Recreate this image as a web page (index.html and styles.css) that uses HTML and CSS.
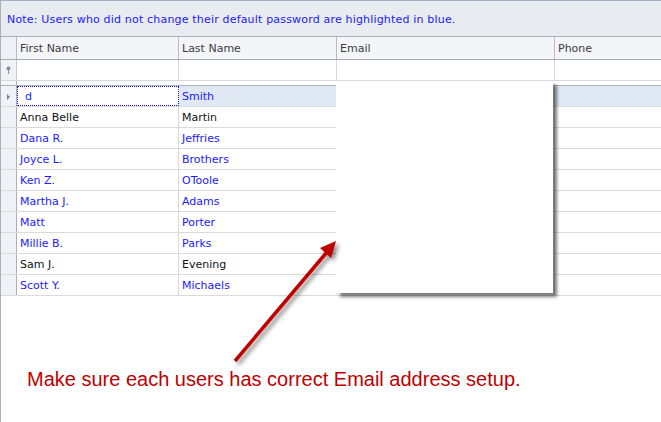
FILE: index.html
```html
<!DOCTYPE html>
<html lang="en">
<head>
    <meta charset="UTF-8">
    <meta name="viewport" content="width=device-width, initial-scale=1.0">
    <title>Users</title>
    <link rel="stylesheet" href="styles.css">
</head>
<body>
    <div class="panel">
        <div class="note">Note: Users who did not change their default password are highlighted in blue.</div>

        <div class="grid">
            <div class="row header">
                <div class="cell indicator"></div>
                <div class="cell">First Name</div>
                <div class="cell">Last Name</div>
                <div class="cell">Email</div>
                <div class="cell">Phone</div>
            </div>
            <div class="row filter">
                <div class="cell indicator">
                    <svg width="7" height="8" viewBox="0 0 7 8">
                        <circle cx="3.5" cy="2.5" r="2" fill="#8a8f96"/>
                        <rect x="3" y="4" width="1" height="4" fill="#8a8f96"/>
                    </svg>
                </div>
                <div class="cell"></div>
                <div class="cell"></div>
                <div class="cell"></div>
                <div class="cell"></div>
            </div>
            <div class="filter-gap"><div class="cell indicator"></div></div>

            <div class="row data selected default-pw">
                <div class="cell indicator">
                    <svg width="5" height="8" viewBox="0 0 5 8"><path d="M1 1 L4 4 L1 7 Z" fill="#7d8188"/></svg>
                </div>
                <div class="cell focused">d</div>
                <div class="cell">Smith</div>
                <div class="cell"></div>
                <div class="cell"></div>
            </div>
            <div class="row data">
                <div class="cell indicator"></div>
                <div class="cell">Anna Belle</div>
                <div class="cell">Martin</div>
                <div class="cell"></div>
                <div class="cell"></div>
            </div>
            <div class="row data default-pw">
                <div class="cell indicator"></div>
                <div class="cell">Dana R.</div>
                <div class="cell">Jeffries</div>
                <div class="cell"></div>
                <div class="cell"></div>
            </div>
            <div class="row data default-pw">
                <div class="cell indicator"></div>
                <div class="cell">Joyce L.</div>
                <div class="cell">Brothers</div>
                <div class="cell"></div>
                <div class="cell"></div>
            </div>
            <div class="row data default-pw">
                <div class="cell indicator"></div>
                <div class="cell">Ken Z.</div>
                <div class="cell">OToole</div>
                <div class="cell"></div>
                <div class="cell"></div>
            </div>
            <div class="row data default-pw">
                <div class="cell indicator"></div>
                <div class="cell">Martha J.</div>
                <div class="cell">Adams</div>
                <div class="cell"></div>
                <div class="cell"></div>
            </div>
            <div class="row data default-pw">
                <div class="cell indicator"></div>
                <div class="cell">Matt</div>
                <div class="cell">Porter</div>
                <div class="cell"></div>
                <div class="cell"></div>
            </div>
            <div class="row data default-pw">
                <div class="cell indicator"></div>
                <div class="cell">Millie B.</div>
                <div class="cell">Parks</div>
                <div class="cell"></div>
                <div class="cell"></div>
            </div>
            <div class="row data">
                <div class="cell indicator"></div>
                <div class="cell">Sam J.</div>
                <div class="cell">Evening</div>
                <div class="cell"></div>
                <div class="cell"></div>
            </div>
            <div class="row data default-pw">
                <div class="cell indicator"></div>
                <div class="cell">Scott Y.</div>
                <div class="cell">Michaels</div>
                <div class="cell"></div>
                <div class="cell"></div>
            </div>
        </div>

        <!-- blank email editor dropdown -->
        <div class="email-popup"></div>

        <!-- callout arrow -->
        <svg class="callout-arrow" viewBox="0 0 661 422" width="661" height="422">
            <line x1="235" y1="361" x2="327" y2="252" stroke="#c00000" stroke-width="3.5"/>
            <path d="M336 241 L331 258 L320 248 Z" fill="#c00000"/>
        </svg>

        <p class="callout-text">Make sure each users has correct Email address setup.</p>
    </div>
</body>
</html>
```

FILE: styles.css
```css
* {
    box-sizing: border-box;
}

body {
    margin: 0;
    width: 661px;
    height: 422px;
    overflow: hidden;
    background-color: #fff;
    font-family: "DejaVu Sans", Tahoma, sans-serif;
    font-size: 11px;
}

.panel {
    position: relative;
    height: 422px;
    border-top: 1px solid #a9b0b9;
    border-left: 1px solid #a9b0b9;
}

.note {
    height: 36px;
    padding: 1px 0 0 6px;
    display: flex;
    align-items: center;
    background-color: #e8ebf0;
    border-bottom: 1px solid #a9b0b9;
    color: #1a1aff;
    letter-spacing: 0.18px;
}

.row {
    display: grid;
    grid-template-columns: 16px 162px 158px 218px 1fr;
}

.cell {
    display: flex;
    align-items: center;
    padding-left: 3px;
    border-right: 1px solid #d5dae1;
    white-space: nowrap;
    overflow: hidden;
}

.cell:last-child {
    border-right: none;
}

.cell.indicator {
    justify-content: center;
    padding-left: 0;
    background-color: #f1f2f5;
    border-right: 1px solid #a9b0b9;
}

/* column headers */
.header {
    height: 23px;
    background-color: #f3f5f8;
    border-bottom: 1px solid #a3abb6;
    color: #3c3c3c;
}

.header .cell {
    border-right-color: #b5bcc6;
}

.header .cell.indicator {
    background-color: #eef0f3;
}

/* auto filter row */
.filter {
    height: 21px;
    border-bottom: 1px solid #d5dae1;
}

.filter .cell.indicator {
    border-right-color: #c3c8d0;
}

.filter-gap {
    height: 5px;
    display: grid;
    grid-template-columns: 16px 1fr;
    border-bottom: 1px solid #a9b0b9;
}

.filter-gap .cell.indicator {
    background-color: #f6f7f9;
}

/* data rows */
.data {
    height: 21px;
    border-bottom: 1px solid #dadada;
    color: #111;
}

.data .cell {
    padding-top: 1px;
}

.data.default-pw {
    color: #1a1aff;
}

.data.selected {
    background-color: #dfe8f3;
}

.data .cell.focused {
    padding-left: 7px;
    background-color: #fff;
    border: 1px dotted #1a1aaa;
}

.email-popup {
    position: absolute;
    left: 335px;
    top: 80px;
    width: 217px;
    height: 212px;
    background-color: #fff;
    box-shadow: 4px 4px 3px rgba(0, 0, 0, 0.5);
}

.callout-arrow {
    position: absolute;
    left: -1px;
    top: -1px;
    pointer-events: none;
    filter: drop-shadow(3px 3px 2px rgba(0, 0, 0, 0.45));
}

.callout-text {
    position: absolute;
    left: 26px;
    top: 367px;
    margin: 0;
    font-family: "Liberation Sans", Arial, sans-serif;
    font-size: 20px;
    color: #c00000;
}
```
